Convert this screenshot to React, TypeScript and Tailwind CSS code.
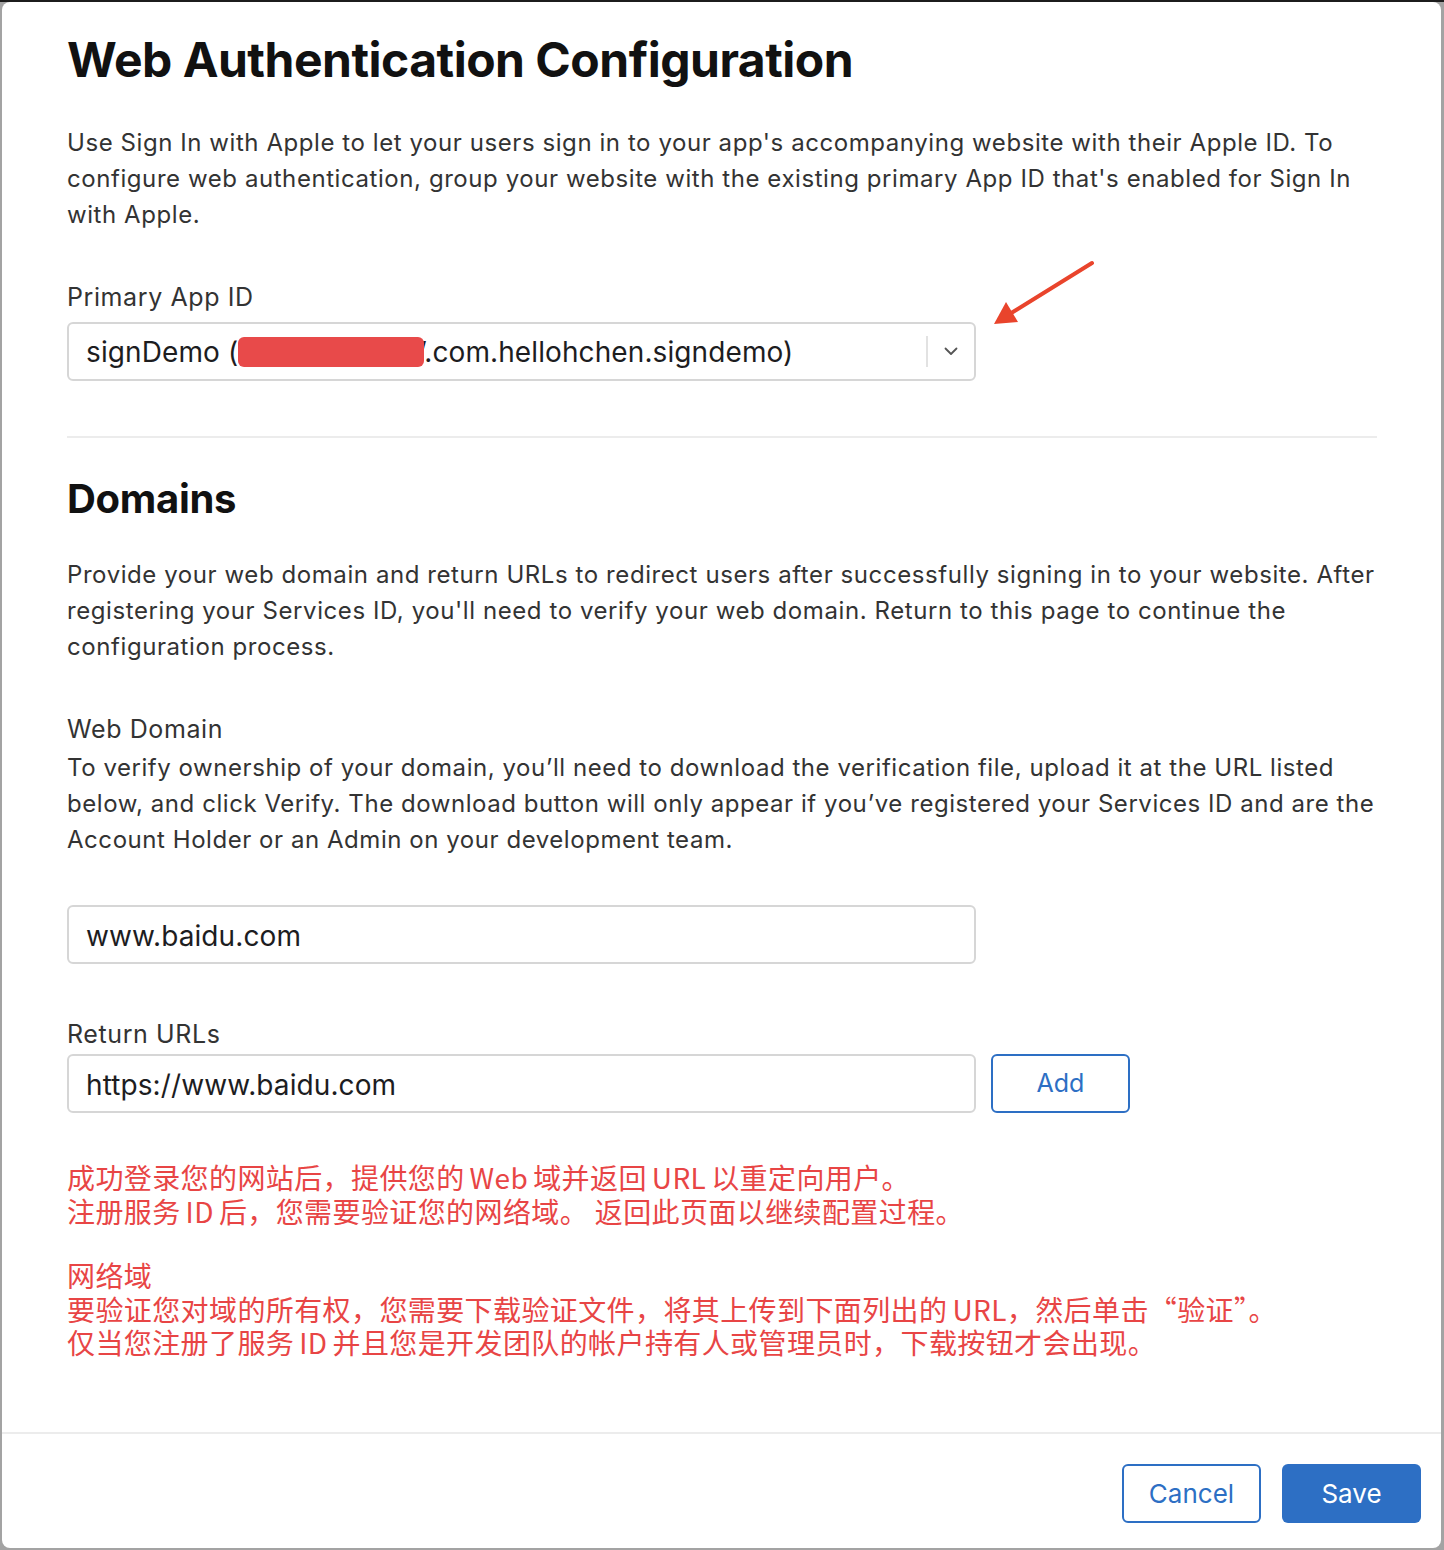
import React from "react";

const font = { fontFamily: "Inter, 'Noto Sans CJK SC', sans-serif" };
const cjk = { fontFamily: "'Noto Sans CJK SC', Inter, sans-serif" };

function Gap() {
  return <span className="inline-block w-[5px]" />;
}

export default function App() {
  return (
    <div
      className="relative flex h-[1550px] w-[1444px] flex-col overflow-hidden bg-[#a3a3a3]"
      style={font}
    >
      <div className="h-[2px] w-full bg-[#1c1c1c]" />
      <div className="mb-[2px] ml-[2px] mr-[3px] flex flex-1 flex-col rounded-[8px] bg-white">
        <div className="flex flex-1 flex-col pl-[65px] pr-[64px] pt-[30px]">
          <h1 className="text-[48px] font-bold leading-[56px] tracking-[-0.5px] text-[#111]">
            Web Authentication Configuration
          </h1>
          <p className="mt-[37px] whitespace-nowrap text-[24px] leading-[36px] tracking-[0.57px] text-[#333]">
            Use Sign In with Apple to let your users sign in to your app's accompanying website with their Apple ID. To
            <br />
            configure web authentication, group your website with the existing primary App ID that's enabled for Sign In
            <br />
            with Apple.
          </p>

          <div className="mt-[49px] text-[25px] leading-[30px] tracking-[0.6px] text-[#333]">Primary App ID</div>
          <div className="relative mt-[10px] flex h-[59px] w-[909px] items-center rounded-[6px] border-2 border-[#d6d6d6] pl-[17px]">
            <div className="flex flex-1 items-center whitespace-nowrap text-[28px] tracking-[0.1px] text-[#1d1d1f]">
              <span>signDemo (‘</span>
              <span className="relative z-10 -ml-[8px] inline-block h-[30px] w-[186px] rounded-[6px] bg-[#e84a4a]" />
              <span className="-ml-[4px]">’.com.hellohchen.signdemo)</span>
            </div>
            <div className="h-[31px] w-[2px] bg-[#e2e2e2]" />
            <div className="flex w-[46px] items-center justify-center">
              <svg width="14" height="9" viewBox="0 0 14 9">
                <path d="M1.5 1.5 L7 7 L12.5 1.5" fill="none" stroke="#555" strokeWidth="1.8" strokeLinecap="round" strokeLinejoin="round" />
              </svg>
            </div>
          </div>

          <div className="mt-[55px] h-[2px] w-full bg-[#ececec]" />

          <h2 className="mt-[37px] text-[40px] font-bold leading-[48px] tracking-[-0.3px] text-[#111]">Domains</h2>
          <p className="mt-[34px] whitespace-nowrap text-[24px] leading-[36px] tracking-[0.58px] text-[#333]">
            Provide your web domain and return URLs to redirect users after successfully signing in to your website. After
            <br />
            registering your Services ID, you'll need to verify your web domain. Return to this page to continue the
            <br />
            configuration process.
          </p>

          <div className="mt-[49px] text-[25px] leading-[30px] tracking-[0.6px] text-[#333]">Web Domain</div>
          <p className="mt-[6px] whitespace-nowrap text-[24px] leading-[36px] tracking-[0.55px] text-[#333]">
            To verify ownership of your domain, you’ll need to download the verification file, upload it at the URL listed
            <br />
            below, and click Verify. The download button will only appear if you’ve registered your Services ID and are the
            <br />
            Account Holder or an Admin on your development team.
          </p>

          <div className="mt-[47px] flex h-[59px] w-[909px] items-center rounded-[6px] border-2 border-[#d6d6d6] pl-[17px] pt-[2px] text-[28px] tracking-[0.1px] text-[#1d1d1f]">
            www.baidu.com
          </div>

          <div className="mt-[55px] text-[25px] leading-[30px] tracking-[0.6px] text-[#333]">Return URLs</div>
          <div className="mt-[5px] flex items-center gap-[15px]">
            <div className="flex h-[59px] w-[909px] items-center rounded-[6px] border-2 border-[#d6d6d6] pl-[17px] pt-[2px] text-[28px] tracking-[0.1px] text-[#1d1d1f]">
              https://www.baidu.com
            </div>
            <button className="flex h-[59px] w-[139px] items-center justify-center rounded-[6px] border-2 border-[#2d6fc4] text-[25px] text-[#2d6fc4]">
              Add
            </button>
          </div>

          <div className="mt-[47px] whitespace-nowrap text-[28px] leading-[34px] tracking-[0.4px] text-[#e84545]" style={cjk}>
            <div>
              成功登录您的网站后，提供您的<Gap />Web<Gap />域并返回<Gap />URL<Gap />以重定向用户。
            </div>
            <div>
              注册服务<Gap />ID<Gap />后，您需要验证您的网络域。 返回此页面以继续配置过程。
            </div>
          </div>
          <div className="mt-[31px] whitespace-nowrap text-[28px] leading-[33.5px] tracking-[0.4px] text-[#e84545]" style={cjk}>
            <div>网络域</div>
            <div>
              要验证您对域的所有权，您需要下载验证文件，将其上传到下面列出的<Gap />URL，然后单击“验证”。
            </div>
            <div>
              仅当您注册了服务<Gap />ID<Gap />并且您是开发团队的帐户持有人或管理员时，下载按钮才会出现。
            </div>
          </div>
        </div>

        <div className="flex h-[116px] justify-end gap-[21px] border-t-2 border-[#ececec] pr-[20px] pt-[30px]">
          <button className="h-[59px] w-[139px] rounded-[6px] border-2 border-[#2d6fc4] text-[26px] text-[#2d6fc4]">
            Cancel
          </button>
          <button className="h-[59px] w-[139px] rounded-[6px] bg-[#2d6fc4] text-[26px] text-white">Save</button>
        </div>
      </div>

      <svg className="absolute left-[985px] top-[250px]" width="120" height="85" viewBox="985 250 120 85">
        <line x1="1092" y1="263" x2="1008" y2="315" stroke="#e9442c" strokeWidth="4" strokeLinecap="round" />
        <polygon points="994,324 1006,302 1018,322" fill="#e9442c" />
      </svg>
    </div>
  );
}
